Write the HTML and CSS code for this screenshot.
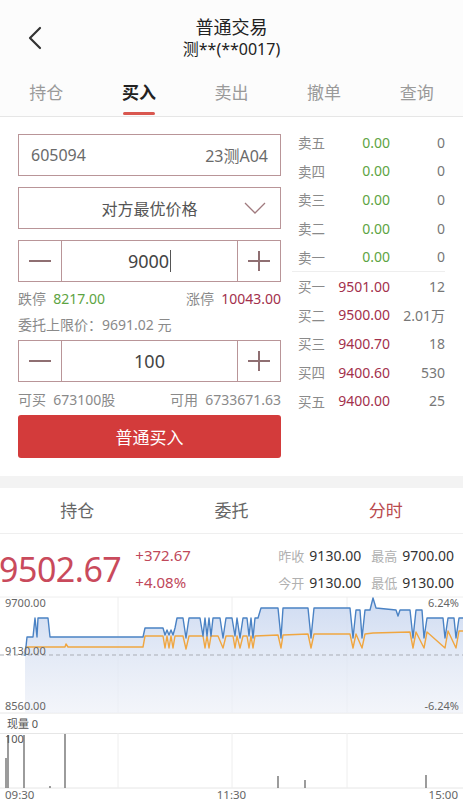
FILE: index.html
```html
<!DOCTYPE html>
<html lang="zh">
<head>
<meta charset="utf-8">
<title>普通交易</title>
<link rel="stylesheet" href="styles.css">
</head>
<body>
<div class="page">
  <header class="header">
    <span class="back">
      <svg width="16" height="24" viewBox="0 0 16 24"><path d="M13 2 L3 12 L13 22" fill="none" stroke="#333" stroke-width="2.2" stroke-linecap="round" stroke-linejoin="round"/></svg>
    </span>
    <div class="title">普通交易</div>
    <div class="subtitle">测**(**0017)</div>
  </header>

  <nav class="tabs">
    <div class="tab">持仓</div>
    <div class="tab active">买入<span class="underline"></span></div>
    <div class="tab">卖出</div>
    <div class="tab">撤单</div>
    <div class="tab">查询</div>
  </nav>

  <section class="trade">
    <div class="form">
      <div class="box code-box"><span>605094</span><span>23测A04</span></div>
      <div class="box select-box">
        <span class="select-text">对方最优价格</span>
        <svg class="caret" width="22" height="12" viewBox="0 0 22 12"><path d="M1 1 L11 11 L21 1" fill="none" stroke="#a07a7e" stroke-width="1.3"/></svg>
      </div>
      <div class="box stepper">
        <span class="step minus"><span class="bar-h"></span></span>
        <span class="step-value">9000<span class="cursor"></span></span>
        <span class="step plus"><span class="bar-h"></span><span class="bar-v"></span></span>
      </div>
      <div class="info-row limits">
        <span>跌停&nbsp; <b class="green">8217.00</b></span>
        <span>涨停&nbsp; <b class="maroon">10043.00</b></span>
      </div>
      <div class="info-row">委托上限价：9691.02 元</div>
      <div class="box stepper qty">
        <span class="step minus"><span class="bar-h"></span></span>
        <span class="step-value">100</span>
        <span class="step plus"><span class="bar-h"></span><span class="bar-v"></span></span>
      </div>
      <div class="info-row avail">
        <span>可买&nbsp; 673100股</span>
        <span>可用&nbsp; 6733671.63</span>
      </div>
      <button class="buy-btn">普通买入</button>
    </div>

    <div class="book">
      <div class="book-row"><span class="lbl">卖五</span><span class="px green">0.00</span><span class="vol">0</span></div>
      <div class="book-row"><span class="lbl">卖四</span><span class="px green">0.00</span><span class="vol">0</span></div>
      <div class="book-row"><span class="lbl">卖三</span><span class="px green">0.00</span><span class="vol">0</span></div>
      <div class="book-row"><span class="lbl">卖二</span><span class="px green">0.00</span><span class="vol">0</span></div>
      <div class="book-row"><span class="lbl">卖一</span><span class="px green">0.00</span><span class="vol">0</span></div>
      <div class="book-divider"></div>
      <div class="book-row"><span class="lbl">买一</span><span class="px maroon">9501.00</span><span class="vol">12</span></div>
      <div class="book-row"><span class="lbl">买二</span><span class="px maroon">9500.00</span><span class="vol">2.01万</span></div>
      <div class="book-row"><span class="lbl">买三</span><span class="px maroon">9400.70</span><span class="vol">18</span></div>
      <div class="book-row"><span class="lbl">买四</span><span class="px maroon">9400.60</span><span class="vol">530</span></div>
      <div class="book-row"><span class="lbl">买五</span><span class="px maroon">9400.00</span><span class="vol">25</span></div>
    </div>
  </section>

  <div class="band"></div>

  <nav class="tabs2">
    <div class="tab2">持仓</div>
    <div class="tab2">委托</div>
    <div class="tab2 active">分时</div>
  </nav>

  <section class="quote">
    <div class="last">9502.67</div>
    <div class="change">
      <div>+372.67</div>
      <div>+4.08%</div>
    </div>
    <div class="stats">
      <div class="stat-line"><span class="k">昨收</span><span class="v">9130.00</span><span class="k">最高</span><span class="v maroon2">9700.00</span></div>
      <div class="stat-line"><span class="k">今开</span><span class="v">9130.00</span><span class="k">最低</span><span class="v">9130.00</span></div>
    </div>
  </section>

  <section class="chart">
    <svg class="chart-svg" width="463" height="118" viewBox="0 598 463 118">
      <defs>
        <linearGradient id="fillg" x1="0" y1="0" x2="0" y2="1">
          <stop offset="0" stop-color="#c9d7f0" stop-opacity="0.9"/>
          <stop offset="0.5" stop-color="#dde5f4" stop-opacity="0.8"/>
          <stop offset="1" stop-color="#eef1f8" stop-opacity="0.7"/>
        </linearGradient>
      </defs>
      <line x1="0" y1="599" x2="463" y2="599" stroke="#eeeeee"/>
      <line x1="0" y1="715" x2="463" y2="715" stroke="#e6e6e6"/>
      <line x1="118" y1="599" x2="118" y2="715" stroke="#eeeeee"/>
      <line x1="232" y1="599" x2="232" y2="715" stroke="#eeeeee"/>
      <line x1="347" y1="599" x2="347" y2="715" stroke="#eeeeee"/>
      <polygon fill="url(#fillg)" points="25,715 25,658 27,639 33,639 35,620 37,639 38,620 48,620 50,639 143,639 145,630 163,630 165,637 167,632 169,637 171,632 173,637 175,630 177,620 183,620 186,640 189,620 200,620 203,638 205,620 207,638 209,620 211,638 213,620 220,620 223,640 226,620 232,620 235,638 237,620 240,640 243,620 247,620 249,638 251,620 253,640 255,620 258,620 261,610 278,610 281,640 283,610 308,610 311,640 314,610 350,610 353,640 356,612 360,612 362,640 365,612 370,612 373,600 376,610 396,612 398,618 400,612 410,612 413,640 416,612 422,612 424,640 427,620 443,620 445,640 448,620 454,620 456,640 459,620 463,620 463,715"/>
      <line x1="0" y1="657" x2="463" y2="657" stroke="#a9adb5" stroke-width="1" stroke-dasharray="4 3"/>
      <polyline fill="none" stroke="#f0a640" stroke-width="1.4" stroke-linejoin="round" points="25,649 65,649 66,646 68,649 143,649 145,638 163,638 165,650 167,638 169,650 171,638 173,650 175,638 183,638 186,651 189,638 203,638 205,650 207,638 209,650 211,638 218,638 223,650 226,638 233,638 235,650 237,638 240,650 243,638 247,638 249,650 251,638 253,650 255,638 278,637 281,650 283,637 308,636 311,650 314,636 350,636 353,650 356,636 362,650 365,636 373,635 410,634 413,650 416,634 424,650 427,634 445,650 448,633 456,650 459,633 463,633"/>
      <polyline fill="none" stroke="#4a82c4" stroke-width="1.4" stroke-linejoin="round" points="25,658 27,639 33,639 35,620 37,639 38,620 48,620 50,639 143,639 145,630 163,630 165,637 167,632 169,637 171,632 173,637 175,630 177,620 183,620 186,640 189,620 200,620 203,638 205,620 207,638 209,620 211,638 213,620 220,620 223,640 226,620 232,620 235,638 237,620 240,640 243,620 247,620 249,638 251,620 253,640 255,620 258,620 261,610 278,610 281,640 283,610 308,610 311,640 314,610 350,610 353,640 356,612 360,612 362,640 365,612 370,612 373,600 376,610 396,612 398,618 400,612 410,612 413,640 416,612 422,612 424,640 427,620 443,620 445,640 448,620 454,620 456,640 459,620 463,620"/>
    </svg>
    <span class="axis tl">9700.00</span>
    <span class="axis ml">9130.00</span>
    <span class="axis bl">8560.00</span>
    <span class="axis tr">6.24%</span>
    <span class="axis br">-6.24%</span>
  </section>

  <div class="vol-label">现量 0</div>
  <section class="volume">
    <svg width="463" height="56" viewBox="0 735 463 56">
      <line x1="0" y1="735.5" x2="463" y2="735.5" stroke="#e6e6e6"/>
      <line x1="0" y1="790" x2="463" y2="790" stroke="#e6e6e6"/>
      <line x1="118" y1="735" x2="118" y2="790" stroke="#eeeeee"/>
      <line x1="232" y1="735" x2="232" y2="790" stroke="#eeeeee"/>
      <line x1="347" y1="735" x2="347" y2="790" stroke="#eeeeee"/>
      <g stroke="#666" stroke-width="1.3">
        <line x1="6" y1="760" x2="6" y2="790"/>
        <line x1="8" y1="737" x2="8" y2="790"/>
        <line x1="24" y1="737" x2="24" y2="790"/>
        <line x1="65" y1="736" x2="65" y2="790"/>
        <line x1="50" y1="788" x2="50" y2="790"/>
        <line x1="278" y1="778" x2="278" y2="790"/>
        <line x1="305" y1="782" x2="305" y2="790"/>
        <line x1="426" y1="777" x2="426" y2="790"/>
      </g>
    </svg>
    <span class="vol-max">100</span>
  </section>
  <div class="times"><span>09:30</span><span>11:30</span><span>15:00</span></div>
</div>
</body>
</html>
```

FILE: styles.css
```css
* { box-sizing: border-box; }
html, body { margin: 0; padding: 0; background: #fff; }
body {
  font-family: "Noto Sans", "Noto Sans CJK SC", sans-serif;
  color: #333;
  width: 463px;
  overflow: hidden;
}
.page { width: 463px; height: 803px; overflow: hidden; }

.header {
  position: relative;
  height: 70px;
  padding-top: 16px;
  text-align: center;
  background: #fcfcfc;
}
.back { position: absolute; left: 27px; top: 26px; }
.title { font-size: 18px; line-height: 22px; color: #222; }
.subtitle { font-size: 16px; line-height: 22px; color: #222; }

.tabs {
  display: flex;
  height: 47px;
  border-bottom: 1px solid #e6e6e6;
  background: #fcfcfc;
}
.tab {
  flex: 1;
  position: relative;
  text-align: center;
  font-size: 17px;
  line-height: 46px;
  color: #9a9a9a;
}
.tab.active { color: #222; font-weight: 700; }
.underline {
  position: absolute;
  left: 50%;
  bottom: 1px;
  width: 32px;
  height: 3px;
  margin-left: -16px;
  border-radius: 2px;
  background: #d9574f;
}

.trade {
  display: flex;
  padding: 11px 18px 18px 18px;
}
.form { width: 263px; padding-top: 6px; }
.box {
  height: 42px;
  border: 1.5px solid #b99598;
  display: flex;
  align-items: center;
}
.box + .box { margin-top: 11px; }
.code-box {
  justify-content: space-between;
  padding: 0 12px;
  font-size: 16px;
  color: #6a6a6a;
}
.select-box { position: relative; justify-content: center; }
.select-text { font-size: 16px; color: #555; }
.caret { position: absolute; right: 14px; top: 14px; }
.stepper { align-items: stretch; }
.step {
  width: 43px;
  position: relative;
  flex: none;
}
.minus { border-right: 1.5px solid #b99598; }
.plus { border-left: 1.5px solid #b99598; }
.bar-h {
  position: absolute;
  left: 10px; right: 10px; top: 50%;
  height: 1.5px;
  margin-top: -1px;
  background: #8f6f72;
}
.bar-v {
  position: absolute;
  top: 10px; bottom: 10px; left: 50%;
  width: 1.5px;
  margin-left: -1px;
  background: #8f6f72;
}
.step-value {
  flex: 1;
  display: flex;
  align-items: center;
  justify-content: center;
  font-size: 18px;
  color: #444;
}
.cursor {
  display: inline-block;
  width: 1px;
  height: 22px;
  background: #555;
  margin-left: 1px;
}
.info-row {
  font-size: 14px;
  line-height: 26px;
  color: #8a8a8a;
}
.info-row b { font-weight: 400; }
.limits {
  display: flex;
  justify-content: space-between;
  margin-top: 4px;
}
.avail {
  display: flex;
  justify-content: space-between;
  margin-top: 5px;
}
.qty { margin-top: 2px; }
.buy-btn {
  display: block;
  width: 100%;
  height: 43px;
  margin-top: 2px;
  border: none;
  border-radius: 3px;
  background: #d33b3b;
  color: #fff;
  font-family: "Noto Sans CJK SC", sans-serif;
  font-size: 17px;
}

.green { color: #5da443; }
.maroon { color: #a3304c; }
.maroon2 { color: #b8404f; }

.book { width: 147px; margin-left: 17px; }
.book-row {
  display: flex;
  align-items: center;
  height: 28.6px;
  font-size: 14px;
}
.lbl { width: 40px; color: #8a8a8a; font-size: 13.5px; }
.px { width: 52px; text-align: right; }
.vol { flex: 1; text-align: right; color: #777; }
.book-divider {
  height: 1px;
  background: #eeeeee;
  margin: 0 0 0 -6px;
}

.band { height: 12px; background: #f3f3f3; }

.tabs2 {
  display: flex;
  height: 46px;
  border-bottom: 1px solid #efefef;
}
.tab2 {
  flex: 1;
  text-align: center;
  font-size: 17px;
  line-height: 46px;
  color: #666;
}
.tab2.active { color: #b94a4e; }

.quote {
  display: flex;
  height: 62px;
  padding-top: 8px;
}
.last {
  font-size: 34px;
  line-height: 54px;
  color: #c94a5c;
  letter-spacing: -0.5px;
  margin-left: -1px;
}
.change {
  margin-left: 14px;
  font-size: 15px;
  line-height: 27px;
  color: #c0485a;
}
.stats { margin-left: auto; padding-right: 9px; }
.stat-line {
  display: flex;
  align-items: center;
  height: 27px;
  font-size: 14px;
}
.stat-line .k { color: #b0b0b0; font-size: 13px; margin-right: 5px; }
.stat-line .v { color: #333; margin-right: 10px; }
.stat-line .v:last-child { margin-right: 0; }

.chart { position: relative; height: 118px; }
.chart-svg { display: block; }
.axis {
  position: absolute;
  font-size: 11px;
  line-height: 14px;
  color: #666;
}
.tl { left: 5px; top: 0px; }
.ml { left: 5px; top: 48px; }
.bl { left: 5px; top: 103px; }
.tr { right: 4px; top: 0px; }
.br { right: 4px; top: 103px; }

.vol-label {
  font-size: 11px;
  line-height: 20px;
  height: 19px;
  padding-left: 7px;
  color: #555;
}
.volume { position: relative; height: 56px; }
.volume svg { display: block; }
.vol-max {
  position: absolute;
  left: 5px; top: 0px;
  font-size: 11px;
  line-height: 12px;
  color: #555;
}
.times {
  display: flex;
  justify-content: space-between;
  padding: 0 5px;
  font-size: 11.5px;
  line-height: 12px;
  color: #666;
}
```
